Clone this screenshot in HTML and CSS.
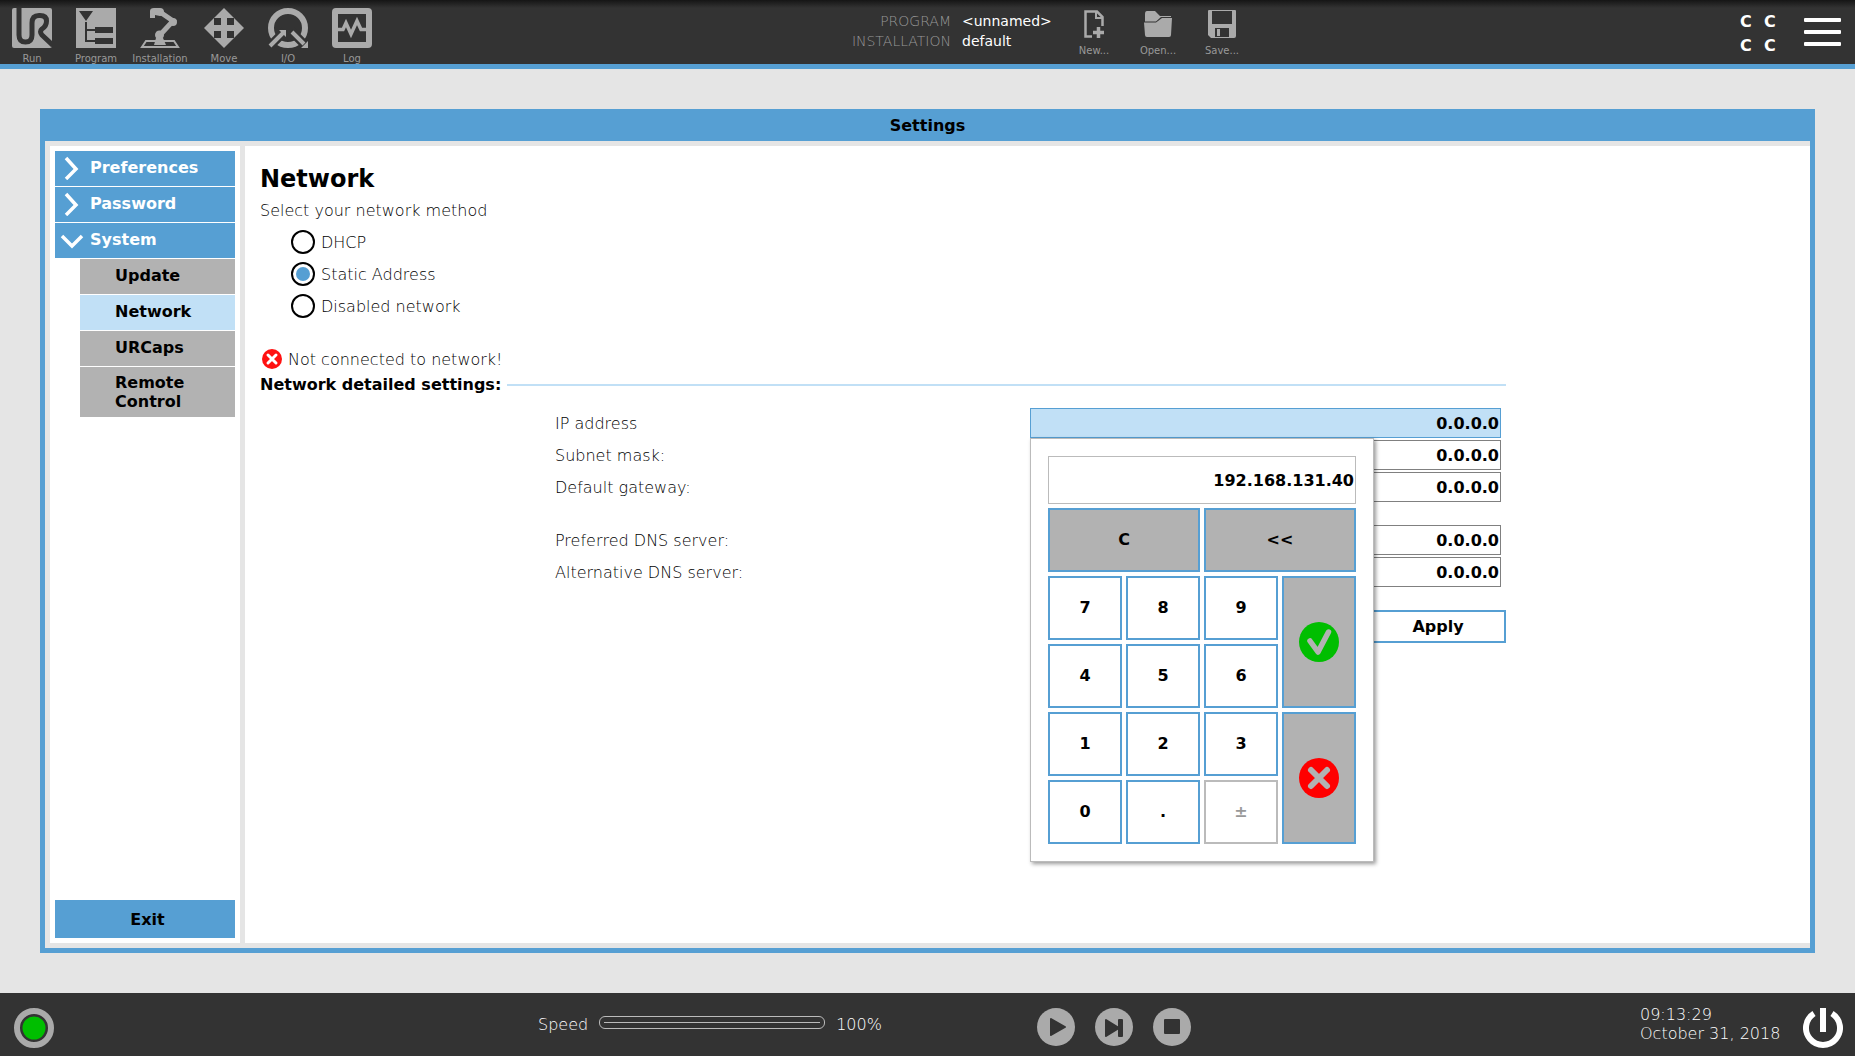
FILE: index.html
```html
<!DOCTYPE html>
<html lang="en">
<head>
<meta charset="utf-8">
<title>Settings</title>
<link rel="stylesheet" href="styles.css">
</head>
<body>
<header class="topbar">
  <nav class="tabs">
    <button class="tool" type="button">
      <svg width="40" height="40" viewBox="0 0 40 40"><rect width="40" height="40" rx="2" fill="#aaa"/><path d="M7 0V27Q7 34 13.500 34Q20 34 20 27V15Q20 7.500 27 7.500H28Q34.500 7.500 34.500 13Q34.500 18 30 21Q27 23.500 30 27L41 37.500" fill="none" stroke="#333" stroke-width="5"/></svg>
      <span>Run</span>
    </button>
    <button class="tool" type="button">
      <svg width="40" height="40" viewBox="0 0 40 40"><rect width="40" height="40" fill="#aaa"/><path d="M3 3H17L10 13ZM19 19H37V25H19ZM19 30H37V36H19Z" fill="#333"/><path d="M10 14V33H19M10 22H19" fill="none" stroke="#333" stroke-width="2"/></svg>
      <span>Program</span>
    </button>
    <button class="tool" type="button">
      <svg width="40" height="40" viewBox="0 0 40 40"><path d="M6 33H34L38 39H2Z" fill="none" stroke="#aaa" stroke-width="2"/><path d="M14 37L16 30H23L26 37Z" fill="#aaa"/><circle cx="19.500" cy="27" r="4.500" fill="#aaa"/><circle cx="33" cy="14" r="4" fill="#aaa"/><path d="M10 3Q10 0 14 0H20Q24 0 24 4Q23 8 20 8L15 7V10H10Z" fill="#aaa"/><path d="M20 4L33 13L20 27" fill="none" stroke="#aaa" stroke-width="5"/></svg>
      <span>Installation</span>
    </button>
    <button class="tool" type="button">
      <svg width="40" height="40" viewBox="0 0 40 40"><path d="M20 0L40 20L20 40L0 20Z" fill="#aaa"/><path d="M10 10H17V17H10ZM23 10H30V17H23ZM10 23H17V30H10ZM23 23H30V30H23Z" fill="#333"/></svg>
      <span>Move</span>
    </button>
    <button class="tool" type="button">
      <svg width="40" height="40" viewBox="0 0 40 40"><circle cx="20" cy="20" r="17" fill="none" stroke="#aaa" stroke-width="6"/><path d="M0 40L17 23M23 23L40 40" stroke="#333" stroke-width="9"/><path d="M2 38L15 25M24 24L36 36" stroke="#aaa" stroke-width="4"/><path d="M11 22H18V29ZM40 33V40H33Z" fill="#aaa"/></svg>
      <span>I/O</span>
    </button>
    <button class="tool" type="button">
      <svg width="40" height="40" viewBox="0 0 40 40"><rect x="3" y="3" width="34" height="34" rx="1" fill="none" stroke="#aaa" stroke-width="6"/><path d="M5 21.500H11L14 15L19 26L25 13L29 21.500H35" fill="none" stroke="#aaa" stroke-width="3.500"/></svg>
      <span>Log</span>
    </button>
  </nav>

  <div class="document">
    <dl class="names">
      <dt>PROGRAM</dt><dd>&lt;unnamed&gt;</dd>
      <dt>INSTALLATION</dt><dd>default</dd>
    </dl>
    <div class="files">
      <button class="tool file" type="button">
        <svg width="28" height="28" viewBox="0 0 28 28"><path d="M12 26.500H5.500V1.500H17L22.500 7V16" fill="none" stroke="#aaa" stroke-width="2.500"/><path d="M16 1V8H23" fill="none" stroke="#aaa" stroke-width="2"/><path d="M18.500 17V28M13 22.500H24" stroke="#aaa" stroke-width="3.500"/></svg>
        <span>New...</span>
      </button>
      <button class="tool file" type="button">
        <svg width="28" height="28" viewBox="0 0 28 28"><path d="M1 10V4Q1 1 3 1H11L16 6H27V7H17L12 11.500H1Z" fill="#aaa"/><path d="M0 12.500H12L18 8H28L27 25Q27 27 25 27H3Q1 27 1 25Z" fill="#aaa"/></svg>
        <span>Open...</span>
      </button>
      <button class="tool file" type="button">
        <svg width="28" height="28" viewBox="0 0 28 28"><path d="M0 1Q0 0 1 0H27Q28 0 28 1V26Q28 28 26 28H3L0 25Z" fill="#aaa"/><path d="M4 1H24V14H4ZM7 18H21V27H7Z" fill="#333"/><rect x="9" y="19" width="3" height="7" fill="#aaa"/></svg>
        <span>Save...</span>
      </button>
    </div>
  </div>

  <div class="corner">
    <div class="checksum"><span>C</span><span>C</span><span>C</span><span>C</span></div>
    <button class="menu" type="button" aria-label="Menu"><i></i><i></i><i></i></button>
  </div>
</header>

<main class="stage">
  <section class="window">
    <h1 class="window-title">Settings</h1>
    <div class="window-body">
      <nav class="sidebar">
        <button class="group" type="button"><svg width="24" height="24" viewBox="0 0 24 24"><path d="M6 2L16 13L6 23" fill="none" stroke="#fff" stroke-width="3.500"/></svg>Preferences</button>
        <button class="group" type="button"><svg width="24" height="24" viewBox="0 0 24 24"><path d="M6 2L16 13L6 23" fill="none" stroke="#fff" stroke-width="3.500"/></svg>Password</button>
        <button class="group" type="button"><svg width="24" height="24" viewBox="0 0 24 24"><path d="M2 8L12 18L22 8" fill="none" stroke="#fff" stroke-width="3.500"/></svg>System</button>
        <button class="item" type="button">Update</button>
        <button class="item current" type="button">Network</button>
        <button class="item" type="button">URCaps</button>
        <button class="item double" type="button">Remote<br>Control</button>
        <button class="exit" type="button">Exit</button>
      </nav>

      <form class="content">
        <h2 class="heading">Network</h2>
        <fieldset class="methods">
          <legend>Select your network method</legend>
          <label><input type="radio" name="method">DHCP</label>
          <label><input type="radio" name="method" checked>Static Address</label>
          <label><input type="radio" name="method">Disabled network</label>
        </fieldset>

        <p class="status"><svg width="20" height="20" viewBox="0 0 20 20"><circle cx="10" cy="10" r="10" fill="#f11"/><path d="M6 6L14 14M14 6L6 14" stroke="#fff" stroke-width="3" stroke-linecap="round"/></svg>Not connected to network!</p>
        <h3 class="divider">Network detailed settings:</h3>

        <div class="fields">
          <label for="ip">IP address</label>
          <div class="anchor">
            <input class="address active" id="ip" type="text" value="0.0.0.0">
            <div class="keypad">
              <input class="display" type="text" value="192.168.131.40" aria-label="New IP address">
              <button class="key wide grey" type="button">C</button>
              <button class="key wide grey" type="button">&lt;&lt;</button>
              <button class="key" type="button">7</button>
              <button class="key" type="button">8</button>
              <button class="key" type="button">9</button>
              <button class="key tall grey" type="button" aria-label="OK"><svg width="40" height="40" viewBox="0 0 40 40"><circle cx="20" cy="20" r="20" fill="#00be00"/><path d="M11 19L19 30L29.500 10" fill="none" stroke="#b2b2b2" stroke-width="5.500" stroke-linecap="round" stroke-linejoin="round"/></svg></button>
              <button class="key" type="button">4</button>
              <button class="key" type="button">5</button>
              <button class="key" type="button">6</button>
              <button class="key" type="button">1</button>
              <button class="key" type="button">2</button>
              <button class="key" type="button">3</button>
              <button class="key tall grey" type="button" aria-label="Cancel"><svg width="40" height="40" viewBox="0 0 40 40"><circle cx="20" cy="20" r="20" fill="#f00"/><path d="M12 12L28 28M28 12L12 28" stroke="#b2b2b2" stroke-width="6" stroke-linecap="round"/></svg></button>
              <button class="key" type="button">0</button>
              <button class="key" type="button">.</button>
              <button class="key" type="button" disabled>±</button>
            </div>
          </div>
          <label for="mask">Subnet mask:</label>
          <input class="address" id="mask" type="text" value="0.0.0.0">
          <label for="gateway">Default gateway:</label>
          <input class="address" id="gateway" type="text" value="0.0.0.0">
          <label class="spaced" for="dns1">Preferred DNS server:</label>
          <input class="address spaced" id="dns1" type="text" value="0.0.0.0">
          <label for="dns2">Alternative DNS server:</label>
          <input class="address" id="dns2" type="text" value="0.0.0.0">
        </div>
        <div class="actions"><button class="apply" type="button">Apply</button></div>
      </form>
    </div>
  </section>
</main>

<footer class="bottombar">
  <button class="round" type="button" aria-label="Robot state"><svg width="40" height="40" viewBox="0 0 40 40"><circle cx="20" cy="20" r="17" fill="none" stroke="#aaa" stroke-width="6"/><circle cx="20" cy="20" r="11.500" fill="#00be00"/></svg></button>
  <div class="speed">
    <label for="speed">Speed</label>
    <input id="speed" type="range" min="0" max="100" value="100">
    <output for="speed">100%</output>
  </div>
  <div class="playback">
    <button class="round" type="button" aria-label="Play"><svg width="38" height="38" viewBox="0 0 38 38"><circle cx="19" cy="19" r="19" fill="#aaa"/><path d="M14 11L28 19L14 27Z" fill="#333" stroke="#333" stroke-width="2" stroke-linejoin="round"/></svg></button>
    <button class="round" type="button" aria-label="Step"><svg width="38" height="38" viewBox="0 0 38 38"><circle cx="19" cy="19" r="19" fill="#aaa"/><path d="M11 12L24 20L11 28Z" fill="#333" stroke="#333" stroke-width="2" stroke-linejoin="round"/><rect x="23" y="11" width="5" height="18" rx="1" fill="#333"/></svg></button>
    <button class="round" type="button" aria-label="Stop"><svg width="38" height="38" viewBox="0 0 38 38"><circle cx="19" cy="19" r="19" fill="#aaa"/><rect x="11" y="11" width="16" height="15" rx="1" fill="#333"/></svg></button>
  </div>
  <div class="clock">
    <time>09:13:29<br>October 31, 2018</time>
    <button class="round" type="button" aria-label="Power"><svg width="40" height="40" viewBox="0 0 40 40"><path d="M11 5.500A17 17 0 1 0 29 5.500" fill="none" stroke="#fff" stroke-width="6"/><rect x="17" width="6" height="24" fill="#fff"/></svg></button>
  </div>
</footer>
</body>
</html>
```
FILE: styles.css
```css
:root {
  --blue: #569fd3;
  --pale: #c1e0f6;
  --grey: #b2b2b2;
  --page: #e5e5e5;
  --bar: #333;
}

* { box-sizing: border-box; }

body {
  margin: 0;
  min-height: 100vh;
  display: flex;
  flex-direction: column;
  background: var(--page);
  color: #000;
  font: 200 16px/19px "DejaVu Sans", "DejaVu Sans Light", sans-serif;
}

button, input { font: inherit; color: inherit; }

button {
  padding: 0;
  border: 0;
  background: none;
  font-weight: 700;
}

svg { display: block; flex: none; }

/* Top bar */
.topbar {
  display: flex;
  justify-content: space-between;
  height: 69px;
  border-bottom: 5px solid var(--blue);
  background: linear-gradient(#151515, var(--bar) 8px);
}

.tabs, .files, .document { display: flex; }

.tool {
  display: flex;
  flex-direction: column;
  align-items: center;
  width: 64px;
  padding-top: 8px;
  gap: 5px;
  color: #999;
  font-size: 10px;
  font-weight: 400;
  line-height: 12px;
}

.file { padding-top: 10px; gap: 7px; }

.document { padding-right: 14px; gap: 14px; }

.names {
  display: grid;
  grid-template-columns: 95px 86px;
  column-gap: 11px;
  align-content: start;
  justify-items: end start;
  margin: 0;
  padding-top: 11px;
  font-size: 14px;
  line-height: 20px;
}

.names dt { justify-self: end; color: #999; white-space: nowrap; }
.names dd { margin: 0; color: #fff; font-weight: 400; }

.corner {
  display: flex;
  gap: 16px;
  padding-right: 14px;
}

.checksum {
  display: grid;
  grid-template-columns: 24px 24px;
  align-content: start;
  padding-top: 10px;
  color: #fff;
  font-weight: 700;
  line-height: 24px;
}

.menu {
  display: flex;
  flex-direction: column;
  gap: 8px;
  padding-top: 18px;
}

.menu i {
  width: 37px;
  height: 4px;
  border-radius: 1px;
  background: #fff;
}

/* Settings window */
.stage {
  flex: 1;
  display: flex;
  padding: 40px;
}

.window {
  flex: 1;
  display: flex;
  flex-direction: column;
  border: 5px solid var(--blue);
  border-top: 0;
}

.window-title {
  margin: 0;
  padding-top: 2px;
  background: var(--blue);
  font-size: 16px;
  line-height: 30px;
  text-align: center;
}

.window-body {
  flex: 1;
  display: grid;
  grid-template-columns: 190px 1fr;
  gap: 5px;
  padding: 5px 0 5px 5px;
}

.sidebar {
  display: flex;
  flex-direction: column;
  gap: 1px;
  padding: 5px;
  background: #fff;
}

.group, .item {
  display: flex;
  align-items: center;
  min-height: 35px;
  padding-bottom: 2px;
  text-align: left;
}

.group {
  gap: 6px;
  padding-left: 5px;
  background: var(--blue);
  color: #fff;
}

.item {
  margin-left: 25px;
  padding-left: 35px;
  background: var(--grey);
}

.double { min-height: 50px; padding-bottom: 0; }
.current { background: var(--pale); }

.exit {
  height: 38px;
  margin-top: auto;
  padding-left: 5px;
  background: var(--blue);
}

/* Network page */
.content {
  padding: 17px 15px;
  background: #fff;
}

.heading {
  margin: 0 0 6px;
  font-size: 24px;
  line-height: 32px;
}

.methods {
  margin: 0 0 24px;
  padding: 0;
  border: 0;
}

.methods legend { padding: 0; margin-bottom: 6px; }

.methods label {
  display: flex;
  align-items: center;
  gap: 6px;
  height: 32px;
  margin-left: 31px;
}

.methods input {
  appearance: none;
  width: 24px;
  height: 24px;
  margin: 0;
  padding: 3px;
  border: 2px solid #000;
  border-radius: 50%;
}

.methods input:checked { background: var(--blue) content-box; }

.status {
  display: flex;
  align-items: center;
  gap: 6px;
  margin: 0;
  padding-left: 2px;
  height: 26px;
}

.divider {
  display: flex;
  align-items: center;
  gap: 6px;
  max-width: 1246px;
  margin: 0 0 10px;
  font-size: 16px;
  line-height: 26px;
}

.divider::after {
  content: "";
  flex: 1;
  height: 2px;
  background: var(--pale);
}

.fields {
  display: grid;
  grid-template-columns: 475fr 471fr;
  row-gap: 2px;
  align-items: center;
  max-width: 1241px;
  padding-left: 295px;
}

.spaced { margin-top: 21px; }
.anchor { position: relative; }

.address, .display {
  display: block;
  width: 100%;
  padding: 0 1px;
  border: 1px solid #808080;
  border-radius: 0;
  background: #fff;
  font-weight: 700;
  text-align: right;
}

.address { height: 30px; }

.active {
  border-color: var(--blue);
  background: var(--pale);
}

.actions {
  display: flex;
  justify-content: flex-end;
  max-width: 1246px;
  padding-top: 23px;
}

.apply {
  width: 136px;
  height: 33px;
  border: 2px solid var(--blue);
  background: #fff;
}

/* Keypad opened under the active field */
.keypad {
  position: absolute;
  top: 100%;
  left: 0;
  z-index: 1;
  display: grid;
  grid-template-columns: repeat(4, 74px);
  grid-template-rows: 48px;
  grid-auto-rows: 64px;
  gap: 4px;
  padding: 17px;
  border: 1px solid #bbb;
  background: #fff;
  box-shadow: 2px 2px 4px rgba(0, 0, 0, .4);
}

.display {
  grid-column: span 4;
  border-color: #bbb;
}

.key {
  display: grid;
  place-content: center;
  padding-bottom: 2px;
  border: 2px solid var(--blue);
  background: #fff;
}

.key:disabled { border-color: #bbb; color: #999; }
.wide { grid-column: span 2; }
.tall { grid-column: 4; grid-row: span 2; padding-bottom: 0; }
.grey { background: var(--grey); }

/* Bottom bar */
.bottombar {
  display: grid;
  grid-template-columns: 538fr 499fr 603fr 215fr;
  align-items: start;
  min-height: 63px;
  padding-top: 15px;
  background: var(--bar);
  color: #fff;
}

.bottombar > .round { margin-left: 14px; justify-self: start; }

.speed {
  display: flex;
  align-items: center;
  gap: 11px;
  padding-top: 7px;
}

.speed input {
  appearance: none;
  width: 226px;
  height: 13px;
  margin: 0 0 4px;
  border: 1px solid #bbb;
  border-radius: 6px;
  background: linear-gradient(#bbb, #bbb) center / 216px 1px no-repeat;
}

.speed input::-webkit-slider-thumb {
  appearance: none;
  width: 1px;
  height: 1px;
}

.playback { display: flex; gap: 20px; }

.clock {
  display: flex;
  justify-content: space-between;
  padding-right: 12px;
}

.clock time { margin-top: -3px; white-space: nowrap; }
```
